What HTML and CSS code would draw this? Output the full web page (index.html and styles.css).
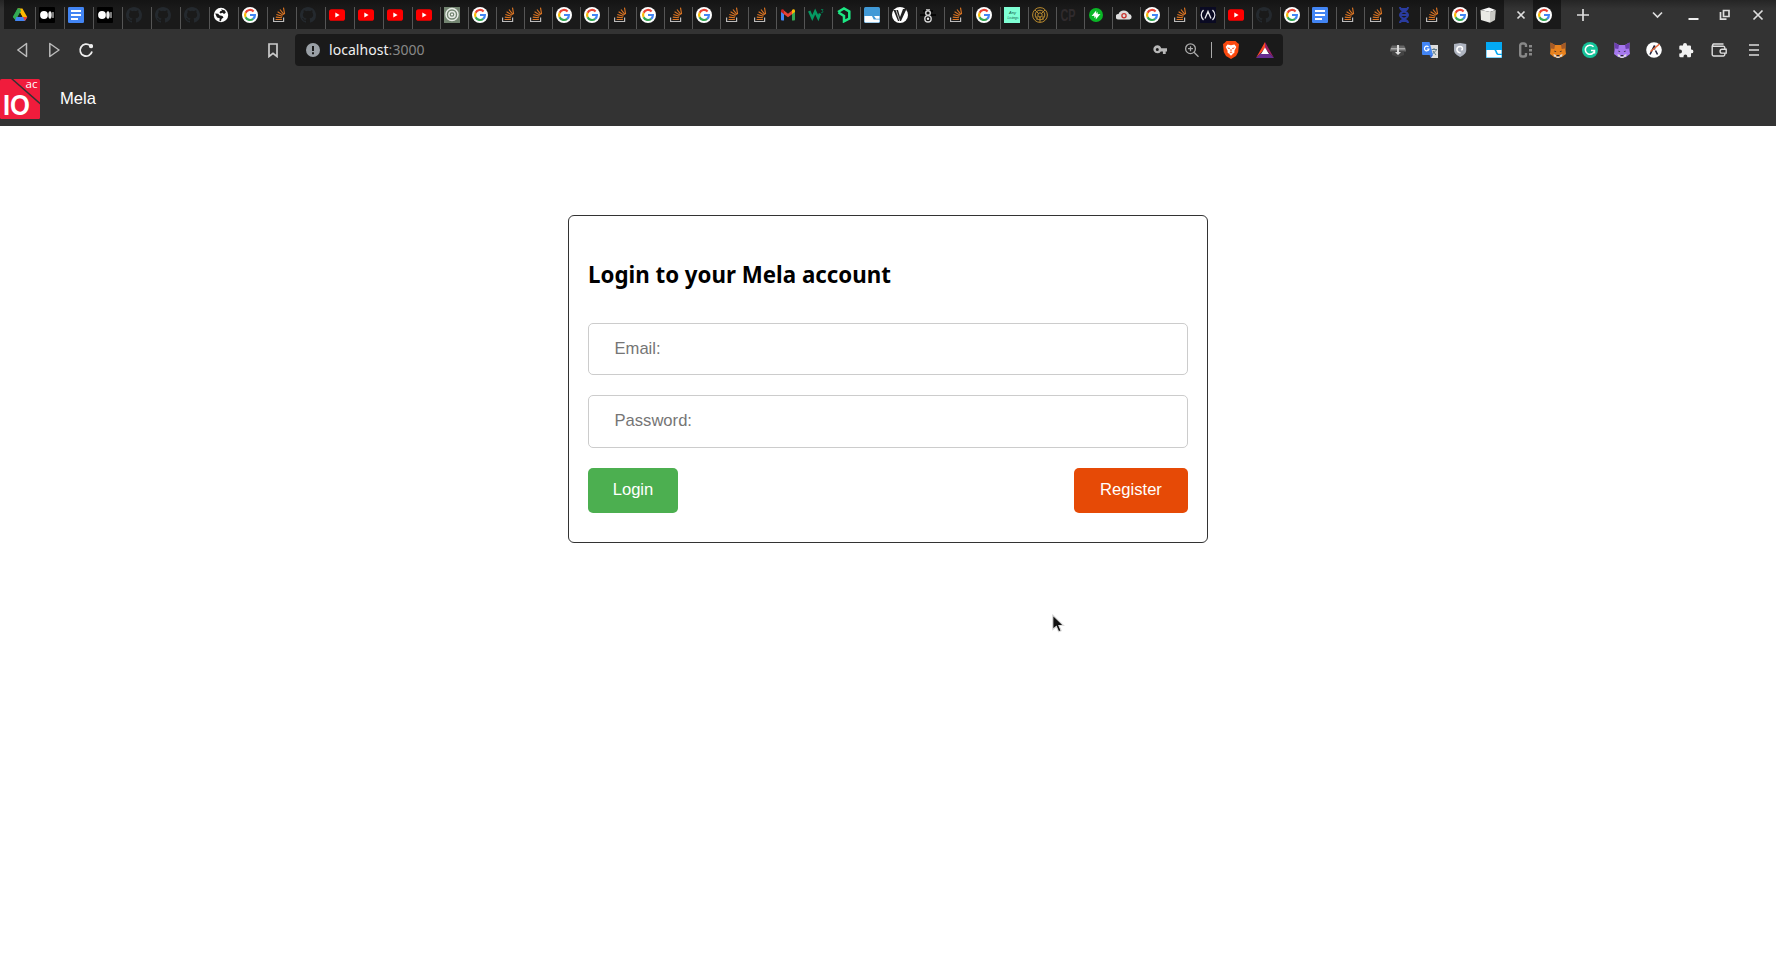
FILE: index.html
```html
<!DOCTYPE html>
<html lang="en">
<head>
<meta charset="utf-8">
<title>Mela</title>
<link rel="stylesheet" href="styles.css">
</head>
<body>
<svg class="sprite" xmlns="http://www.w3.org/2000/svg">
  <symbol id="drive" viewBox="0 0 16 16"><path fill="#0f9d58" d="M5.6 1.5h2.6L3.6 13.5.9 10z"/><path fill="#ffba00" d="M5.6 1.5h4.8L15.2 10h-4.8z"/><path fill="#34a853" d="M5.6 1.5H8L9 4 4 13.2.8 10z"/><path fill="#4285f4" d="M4.3 10h11l-2.4 4H3z"/><path fill="#ea4335" d="M11 10h4.3l-2.4 4z"/><path fill="#1a1a1a" d="M8 5.8l2.4 4.2H5.6z"/></symbol>
  <symbol id="medium" viewBox="0 0 16 16"><rect width="16" height="16" rx="1" fill="#000"/><circle cx="5" cy="8" r="3.9" fill="#fff"/><ellipse cx="11" cy="8" rx="1.7" ry="3.7" fill="#eee"/><rect x="13.4" y="5" width="1.2" height="6" rx=".6" fill="#ccc"/></symbol>
  <symbol id="docs" viewBox="0 0 16 16"><rect width="16" height="16" rx="1.3" fill="#4285f4"/><path fill="#fff" d="M3 3h10v2H3zM3 7h10v2H3zM3 11h7v2H3z"/></symbol>
  <symbol id="github" viewBox="0 0 16 16"><path fill="#24292e" d="M8 0C3.58 0 0 3.58 0 8c0 3.54 2.29 6.53 5.47 7.59.4.07.55-.17.55-.38v-1.49c-2.01.37-2.53-.49-2.69-.94-.09-.23-.48-.94-.82-1.13-.28-.15-.68-.52-.01-.53.63-.01 1.08.58 1.23.82.72 1.21 1.87.87 2.33.66.07-.52.28-.87.51-1.07-1.78-.2-3.64-.89-3.64-3.95 0-.87.31-1.59.82-2.15-.08-.2-.36-1.02.08-2.12 0 0 .67-.21 2.2.82a7.4 7.4 0 0 1 4 0c1.53-1.04 2.2-.82 2.2-.82.44 1.1.16 1.92.08 2.12.51.56.82 1.27.82 2.15 0 3.07-1.87 3.75-3.65 3.95.29.25.54.73.54 1.48v2.2c0 .21.15.46.55.38A8 8 0 0 0 16 8c0-4.42-3.58-8-8-8z"/></symbol>
  <symbol id="globe" viewBox="0 0 16 16"><circle cx="8" cy="8" r="7.2" fill="#fff"/><path fill="#1a1a1a" d="M2.200 6.500l3 .3 1.200 1.400L9.500 9l1 1.500-2 1.500-.5 2.200-1.500-.2.200-2.800-2.700-.7zM8 2.200l4 1.300.8 2.300-1.800 1.200-1.500-1.200-2 .8-1-1 .7-1.400 1.800-.4z"/></symbol>
  <symbol id="google" viewBox="0 0 16 16"><circle cx="8" cy="8" r="8" fill="#fff"/><g fill="none" stroke-width="2.200"><path stroke="#ea4335" d="M11.600 4.500A4.900 4.900 0 0 0 3.600 5.800"/><path stroke="#fbbc05" d="M3.650 5.700a4.900 4.900 0 0 0 0 4.600"/><path stroke="#34a853" d="M3.600 10.200a4.900 4.900 0 0 0 7.600 1.600"/><path stroke="#4285f4" d="M8 8h4.900a4.900 4.900 0 0 1-1.800 3.900"/></g></symbol>
  <symbol id="so" viewBox="0 0 16 16"><path fill="none" stroke="#bcbbbb" stroke-width="1.200" d="M2.600 10.500v4h10v-4"/><path fill="none" stroke="#f48024" stroke-width="1.100" d="M4.600 12.500h6.300M4.800 10.100l6.200.7M5.400 7.500l6 1.800M6.600 4.800l5.400 3.300M9 2.500l4 5.100M12.500.700l1.100 6.400" opacity=".9"/></symbol>
  <symbol id="youtube" viewBox="0 0 16 16"><rect y="2.300" width="16" height="11.500" rx="2.600" fill="#f00"/><path fill="#fff" d="M6.300 5.500v5L10.600 8z"/></symbol>
  <symbol id="rings" viewBox="0 0 16 16"><rect width="16" height="16" fill="#738571"/><g fill="none" stroke="#e8ece7" stroke-width="1.500"><circle cx="8" cy="7.500" r="6"/><circle cx="8" cy="7.500" r="3.100"/></g><circle cx="8" cy="7.500" r="1" fill="#fff"/></symbol>
  <symbol id="gmail" viewBox="0 0 16 16"><path fill="#4285f4" d="M1 4l3 2.200V13.500H2a1 1 0 0 1-1-1z"/><path fill="#34a853" d="M15 4l-3 2.200v7.300h2a1 1 0 0 0 1-1z"/><path fill="#ea4335" d="M3 2.800l5 3.900 5-3.900v3.800l-5 3.700-5-3.700z"/><path fill="#c5221f" d="M1 4c0-1.800 1.700-2.200 3-1v4L1 5z"/><path fill="#fbbc04" d="M15 4c0-1.800-1.700-2.200-3-1v4l3-2z"/></symbol>
  <symbol id="w3" viewBox="0 0 16 16"><path fill="none" stroke="#059862" stroke-width="2.500" d="M1.200 4l3.100 7L7.200 4.500l3.100 6.500L12 6.500"/><path fill="none" stroke="#06704b" d="M13 2.500h2L14 4c2 .2 1 2.300-1 1.500"/></symbol>
  <symbol id="hexleaf" viewBox="0 0 16 16"><path fill="none" stroke="#1ce783" stroke-width="2.500" d="M2 5l6-3.500 5.300 3v7L8 14.300V9L2.500 5.500"/></symbol>
  <symbol id="bluebox" viewBox="0 0 16 16"><rect width="16" height="16" rx="1.500" fill="#4099d6"/><path fill="#fff" d="M.500 9H8l1.700 3.500H15.500v2a1 1 0 0 1-1 1h-13a1 1 0 0 1-1-1zM10 9h5.500v2.700H12z"/></symbol>
  <symbol id="vee" viewBox="0 0 16 16"><circle cx="8" cy="8" r="8" fill="#fff"/><path fill="#222" d="M1.500 3H6l2 7 3-8h3.500L9 14H6z"/><path stroke="#fff" stroke-width=".7" d="M4 3l3.700 11"/></symbol>
  <symbol id="robot" viewBox="0 0 16 16"><path stroke="#050505" stroke-width="2" d="M0 8h16M3 4h10"/><g fill="#111" stroke="#d5d5d5" stroke-width="1.400"><circle cx="8" cy="6" r="2.300"/><circle cx="8" cy="11.800" r="3.200"/></g><circle cx="8" cy="11.800" r="1.200" fill="#eee"/><path stroke="#aaa" d="M6 2.500h4"/></symbol>
  <symbol id="radar" viewBox="0 0 16 16"><g fill="none" stroke="#b98a2e"><circle cx="8" cy="8" r="7.400"/><circle cx="8" cy="8" r="4.800"/><circle cx="8" cy="8" r="2.200"/><path d="M3 3l4 4M13 3L9 7M8 9v6M5 13V9M11 13V9"/></g></symbol>
  <symbol id="bolt" viewBox="0 0 16 16"><circle cx="8" cy="8" r="7" fill="#0ab626"/><path fill="#fff" d="M8.200 3.500v5.200l-1.700 2.500-.3-2.400-2.600.2zM7.800 12.500V7.300l1.700-2.500.3 2.400 2.600-.2z"/></symbol>
  <symbol id="cloud" viewBox="0 0 16 16"><path fill="#ddd" d="M2.500 12.500A2.500 2.500 0 0 1 2.500 7 5.500 5 0 0 1 13 7a2.800 2.800 0 0 1 .5 5.500z"/><circle cx="8" cy="8.800" r="2.100" fill="none" stroke="#c8302c" stroke-width="1.300"/></symbol>
  <symbol id="fcc" viewBox="0 0 16 16"><rect width="16" height="16" fill="#0a0a23"/><g fill="none" stroke="#e8e8ee" stroke-width="1.300"><path d="M3.500 3c-3 3-3 7 0 10M12.500 3c3 3 3 7 0 10M5 11.500L8 4.500l3 7"/></g></symbol>
  <symbol id="dna" viewBox="0 0 16 16"><path fill="none" stroke="#2a3c9f" stroke-width="2" d="M4 0c0 5 8 4 8 8s-8 4-8 8M12 0c0 5-8 4-8 8s8 4 8 8M5 2h6M5 14h6M4.500 8h7"/></symbol>
  <symbol id="cube" viewBox="0 0 16 16"><path fill="#fafafa" d="M1 3l8-2.500L15.500 3 10 5z"/><path fill="#e9e9e5" d="M.500 3L10 5v10.800L1 13z"/><path fill="#c9c9c4" d="M10 5l5.800-2-.8 10-5 2.800z"/></symbol>
  <symbol id="anvil" viewBox="0 0 16 16"><path fill="#666" d="M2 3.500h12l2 3.500v2.500H0V7z"/><path fill="#aaa" d="M1 6h14v1.500H1z"/><path fill="#444" d="M2 9.500h12V13l-5 2H7l-5-2z"/><path fill="#ddd" d="M7 3h2v7h2l-3 3-3-3h2z"/></symbol>
  <symbol id="translate" viewBox="0 0 16 16"><path fill="#ddd" d="M7 3h9v13H9z"/><path stroke="#607d8b" d="M9.500 7.500H15M12 6v1.500M10.500 12l4-4M11 9l3 4"/><path fill="#4285f4" d="M0 0h7.500L11 13H1a1 1 0 0 1-1-1z"/><path fill="#3367d6" d="M7.500 13H11l-2 3z"/><path fill="none" stroke="#fff" stroke-width="1.200" d="M6.500 5a2.300 2.300 0 1 0 .5 2H4.800"/></symbol>
  <symbol id="shield" viewBox="0 0 16 16"><path fill="#aeb4c0" d="M0 1l7-1 7 1v7c0 4-4 6.500-7 8-3-1.500-7-4-7-8z"/><path fill="none" stroke="#fff" stroke-width="1.800" d="M7.500 11.500C1.500 10 2.500 4 7 4c3 0 3.500 3 1.500 4.500"/></symbol>
  <symbol id="cyan" viewBox="0 0 16 16"><rect width="16" height="16" fill="#03a9f4"/><path fill="#fff" d="M.500 8H8c1.500 0 1.500 5 4 5h3.500v2.500H.500z"/><path fill="#fff" d="M10 8h5.500v3.800H13c-2 0-1.500-2.800-3-3.800z"/></symbol>
  <symbol id="cdots" viewBox="0 0 16 16"><path fill="none" stroke="#888" stroke-width="2.400" d="M8 5V3.500a2 2 0 0 0-2-2H4.200a2 2 0 0 0-2 2v9a2 2 0 0 0 2 2H6a2 2 0 0 0 2-2V11"/><path stroke="#888" stroke-width="3" stroke-dasharray="2.400 1.600" d="M12.500 3v10.500"/></symbol>
  <symbol id="fox" viewBox="0 0 16 16"><path fill="var(--fur)" d="M.500.500L5 3h6L15.500.500V8l.5 4-4 3-4 1-4-1-4-3 .5-4z"/><path fill="var(--dark)" d="M.500.500L5 3l-.7 4L1 6.500zM15.500.500L11 3l.7 4L15 6.500z"/><path fill="#292531" d="M4.500 8.500l2 1.300-1.800.3zM11.500 8.500l-2 1.300 1.800.3zM6.500 13h3l-.5 1.500H7z"/><path fill="#ddd" d="M3.500 12l2.500 1v2l-2-.5zM12.500 12L10 13v2l2-.5zM6 14.500h4l-.5 1.500h-3z"/></symbol>
  <symbol id="grammarly" viewBox="0 0 16 16"><circle cx="8" cy="8" r="8" fill="#15c39a"/><path fill="none" stroke="#fff" stroke-width="1.500" d="M11.500 4.800a4.600 4.600 0 1 0 1 3.700H9M12.500 8v3.500"/></symbol>
  <symbol id="aptos" viewBox="0 0 16 16"><circle cx="8" cy="8" r="7.800" fill="#fff"/><path fill="none" stroke="#22223a" stroke-width="1.600" d="M4 12.500l4.500-9v4M9.500 8.500l2 4"/><path stroke="#e96a3a" stroke-width="1.500" d="M4.500 9.500L13.500 2"/></symbol>
  <symbol id="puzzle" viewBox="0 0 16 16"><path fill="#f2f2f2" d="M5 3.500V3a2 2 0 0 1 4 0v.5h3a1.200 1.200 0 0 1 1 1V7.500h.5a1.900 1.900 0 0 1 0 3.800H13v3a1 1 0 0 1-1 1H9.300v-.8a1.900 1.900 0 0 0-3.800 0v.8H2.500a1.200 1.200 0 0 1-1.200-1V11.500H2a2 2 0 0 0 0-4h-.7v-3a1 1 0 0 1 1-1z"/></symbol>
  <symbol id="wallet" viewBox="0 0 16 16"><g fill="none" stroke="#dedede" stroke-width="1.400"><path d="M1.200 3.500v9A1.500 1.500 0 0 0 2.700 14h9.600a1.500 1.500 0 0 0 1.500-1.500V5.800a1.500 1.500 0 0 0-1.500-1.500H2.500a1.200 1.200 0 0 1 0-2.300h10"/><path fill="#333" d="M15.200 7.300H11a1.900 1.900 0 0 0 0 3.800h4.200z"/></g></symbol>
</svg>

<header class="browser">
  <div class="tabstrip">
    <div class="tabs">
      <div class="tab first"><svg><use href="#drive"/></svg></div>
      <div class="tab wide"><svg><use href="#medium"/></svg></div>
      <div class="tab wide"><svg><use href="#docs"/></svg></div>
      <div class="tab wide"><svg><use href="#medium"/></svg></div>
      <div class="tab wide"><svg><use href="#github"/></svg></div>
      <div class="tab wide"><svg><use href="#github"/></svg></div>
      <div class="tab wide"><svg><use href="#github"/></svg></div>
      <div class="tab wide"><svg><use href="#globe"/></svg></div>
      <div class="tab wide"><svg><use href="#google"/></svg></div>
      <div class="tab wide"><svg><use href="#so"/></svg></div>
      <div class="tab wide"><svg><use href="#github"/></svg></div>
      <div class="tab wide"><svg><use href="#youtube"/></svg></div>
      <div class="tab wide"><svg><use href="#youtube"/></svg></div>
      <div class="tab wide"><svg><use href="#youtube"/></svg></div>
      <div class="tab"><svg><use href="#youtube"/></svg></div>
      <div class="tab"><svg><use href="#rings"/></svg></div>
      <div class="tab"><svg><use href="#google"/></svg></div>
      <div class="tab"><svg><use href="#so"/></svg></div>
      <div class="tab"><svg><use href="#so"/></svg></div>
      <div class="tab"><svg><use href="#google"/></svg></div>
      <div class="tab"><svg><use href="#google"/></svg></div>
      <div class="tab"><svg><use href="#so"/></svg></div>
      <div class="tab"><svg><use href="#google"/></svg></div>
      <div class="tab"><svg><use href="#so"/></svg></div>
      <div class="tab"><svg><use href="#google"/></svg></div>
      <div class="tab"><svg><use href="#so"/></svg></div>
      <div class="tab"><svg><use href="#so"/></svg></div>
      <div class="tab"><svg><use href="#gmail"/></svg></div>
      <div class="tab"><svg><use href="#w3"/></svg></div>
      <div class="tab"><svg><use href="#hexleaf"/></svg></div>
      <div class="tab"><svg><use href="#bluebox"/></svg></div>
      <div class="tab"><svg><use href="#vee"/></svg></div>
      <div class="tab"><svg><use href="#robot"/></svg></div>
      <div class="tab"><svg><use href="#so"/></svg></div>
      <div class="tab"><svg><use href="#google"/></svg></div>
      <div class="tab"><svg viewBox="0 0 16 16"><rect width="16" height="16" fill="#7fffd4"/><text class="mint-text" x="5" y="7">Any</text><text class="mint-text" x="3.500" y="11.600" textLength="11" lengthAdjust="spacingAndGlyphs">Listings</text></svg></div>
      <div class="tab"><svg><use href="#radar"/></svg></div>
      <div class="tab"><svg viewBox="0 0 16 16"><text class="cp-text" x=".5" y="14" textLength="15" lengthAdjust="spacingAndGlyphs">CP</text></svg></div>
      <div class="tab"><svg><use href="#bolt"/></svg></div>
      <div class="tab"><svg><use href="#cloud"/></svg></div>
      <div class="tab"><svg><use href="#google"/></svg></div>
      <div class="tab"><svg><use href="#so"/></svg></div>
      <div class="tab"><svg><use href="#fcc"/></svg></div>
      <div class="tab"><svg><use href="#youtube"/></svg></div>
      <div class="tab"><svg><use href="#github"/></svg></div>
      <div class="tab"><svg><use href="#google"/></svg></div>
      <div class="tab"><svg><use href="#docs"/></svg></div>
      <div class="tab"><svg><use href="#so"/></svg></div>
      <div class="tab"><svg><use href="#so"/></svg></div>
      <div class="tab"><svg><use href="#dna"/></svg></div>
      <div class="tab"><svg><use href="#so"/></svg></div>
      <div class="tab"><svg><use href="#google"/></svg></div>
      <div class="tab"><svg><use href="#cube"/></svg></div>
      <div class="tab active"><svg viewBox="0 0 16 16"><path class="line" d="M4.500 4.500l7 7M11.500 4.500l-7 7"/></svg></div>
      <div class="tab last"><svg><use href="#google"/></svg></div>
    </div>
    <svg class="new-tab" viewBox="0 0 14 14"><path class="line" d="M7 1v12M1 7h12"/></svg>
    <svg class="window-buttons" viewBox="0 0 112 14"><path class="line" d="M1 4.500l4.500 4.500L10 4.500"/><path class="thick" d="M36.500 11h10"/><path class="line" d="M68.500 4v7.200h6M71.500 2.500H77v6h-5.500z"/><path class="line" d="M101.500 2.500l9 9M110.500 2.500l-9 9"/></svg>
  </div>
  <div class="toolbar">
    <svg class="nav-buttons" viewBox="0 0 76 16"><g class="dim"><path d="M9.500 1.500v13L.8 8z"/><path d="M32.800 1.500v13L42 8z"/></g><path class="reload" d="M75 9.500a6 6 0 1 1-1.800-5.800"/><circle cx="74" cy="4.200" r="2.100" fill="#eee"/></svg>
    <svg class="bookmark" viewBox="0 0 10 15"><path d="M1 1h8v12.500L5 10.300l-4 3.200z"/></svg>
    <div class="address">
      <svg class="info" viewBox="0 0 14 14"><circle cx="7" cy="7" r="7" fill="#9aa0a6"/><path fill="#1a1a1a" d="M6 3h2v5H6zM6 9.200h2v2H6z"/></svg>
      <div class="url">localhost<span>:3000</span></div>
      <svg class="address-icons" viewBox="0 0 124 18"><path fill="#b8b8b8" fill-rule="evenodd" d="M4.300 4.300a4 4 0 0 1 3.900 2.900H14v3.200h-1.300V13H9.900v-2.600H7.800a4 4 0 1 1-3.500-6.100zm0 2.600a1.500 1.500 0 1 0 0 3 1.500 1.500 0 0 0 0-3z"/><g fill="none" stroke="#aaa" stroke-width="1.300"><circle cx="37.500" cy="7.700" r="4.900"/><path d="M41 11.300l4.500 4.500M35 7.700h5M37.500 5.200v5"/></g><path fill="#aaa" d="M58 1h1v16h-1z"/><path fill="#fb4a10" d="M73.500 0h9l2 2 1.500 1-.8 8-2.200 4-5 3-5-3-2.200-4L70 3l1.500-1z"/><path fill="#fff" d="M74.500 3.500l3.500.7 3.500-.7L83.300 6l-2 4 .3 1.200-3.600 3.600-3.600-3.600.3-1.200-2-4z"/><path fill="#fb4a10" d="M74 6.500l3 .5-.8 1.300zM82 6.500l-3 .5.800 1.300zM77.600 8h.8l.2 2.600h-1.200zM76 12.300l2-1.300 2 1.300-2-.3z"/><path fill="#ff4724" d="M112 1v6l-4.500 5.500L103 17z"/><path fill="#9e1f63" d="M112 1l9 16-4.500-4.500L112 7z"/><path fill="#662d91" d="M103 17l4.500-4.500h9L121 17z"/><path fill="#fff" d="M112 6.500l4 6.500h-8z"/></svg>
    </div>
    <div class="extensions">
      <svg><use href="#anvil"/></svg>
      <svg><use href="#translate"/></svg>
      <svg class="shield"><use href="#shield"/></svg>
      <svg><use href="#cyan"/></svg>
      <svg><use href="#cdots"/></svg>
      <svg class="fox-orange"><use href="#fox"/></svg>
      <svg><use href="#grammarly"/></svg>
      <svg class="fox-violet"><use href="#fox"/></svg>
      <svg><use href="#aptos"/></svg>
      <svg><use href="#puzzle"/></svg>
      <svg class="wallet"><use href="#wallet"/></svg>
      <svg class="menu" viewBox="0 0 10 16"><path d="M0 3h10M0 8h10M0 13h10" stroke="#ddd" stroke-width="1.500"/></svg>
    </div>
  </div>
</header>

<nav class="site-nav">
  <svg class="logo" viewBox="0 0 40 40"><rect width="40" height="40" rx="1.500" fill="#f01c3c"/><path d="M11.500-.5L40.500 25" stroke="#333" stroke-width="1.500"/><text class="logo-text" x="25.500" y="8.500" textLength="12" lengthAdjust="spacingAndGlyphs">ac</text><text class="logo-text io" x="3" y="35.500" textLength="27" lengthAdjust="spacingAndGlyphs">IO</text></svg>
  <a class="brand">Mela</a>
</nav>

<main class="page">
  <form class="card">
    <h2>Login to your Mela account</h2>
    <input class="email" type="text" placeholder="Email:">
    <input class="password" type="password" placeholder="Password:">
    <div class="actions">
      <button class="login" type="button">Login</button>
      <button class="register" type="button">Register</button>
    </div>
  </form>
</main>
<svg class="cursor" viewBox="0 0 14 20"><path d="M.8 1v14.500l3.500-3 2.300 5.300 2.600-1.100-2.300-5.200h4.700z" fill="#111" stroke="#ddd" stroke-width="1.100"/></svg>
</body>
</html>
```
FILE: styles.css
```css
* { box-sizing: border-box; }
body {
  margin: 0;
  height: 964px;
  overflow: hidden;
  background: #fff;
  font-family: "Liberation Sans", Arial, sans-serif;
  font-size: 16.6px;
}
svg { display: block; flex: none; }
.sprite { position: absolute; width: 0; height: 0; }

.browser { background: #333; }
.tabstrip {
  display: flex;
  height: 29px;
  padding-left: 4px;
  background: linear-gradient(#252525, #333 9px);
}
.tabs { display: flex; }
.tab {
  width: 28px;
  height: 29px;
  padding: 7px 0 0 4px;
  background: linear-gradient(#555, #555) 0 7px / 1px 22px no-repeat, linear-gradient(#141414, #1a1a1a 9px);
}
.tab.wide { width: 29px; }
.tab.first { width: 31px; padding-left: 8px; }
.tab.first, .tab.last { background: linear-gradient(#141414, #1a1a1a 9px); }
.tab.last { padding-left: 3px; }
.tab.active { width: 29px; padding-left: 9px; background: none; }
.tab svg { width: 16px; height: 16px; }
.mint-text { font: italic 4px "Liberation Sans", sans-serif; fill: #154; }
.cp-text { font: 700 17px "Liberation Sans", sans-serif; fill: #302b2d; }
.line { fill: none; stroke: #ddd; stroke-width: 1.7; }
.thick { fill: none; stroke: #eee; stroke-width: 2; }
.new-tab { width: 14px; height: 14px; margin: 8px 0 0 15px; }
.window-buttons { width: 112px; height: 14px; margin: 8px 0 0 61.5px; }

.toolbar { display: flex; align-items: center; height: 42px; padding-left: 17px; }
.nav-buttons { width: 76px; height: 16px; }
.nav-buttons path { fill: none; stroke: #bbb; stroke-width: 1.5; stroke-linejoin: round; }
.nav-buttons .reload { stroke: #eee; stroke-width: 1.8; }
.bookmark { width: 10px; height: 15px; margin-left: 175px; }
.bookmark path { fill: none; stroke: #ccc; stroke-width: 1.7; }
.address {
  display: flex;
  align-items: center;
  width: 988px;
  height: 32px;
  margin-left: 17px;
  padding-left: 11px;
  border-radius: 4px;
  background: #1a1a1a;
}
.info { width: 14px; height: 14px; }
.url {
  flex: 1;
  margin-left: 9px;
  color: #f0f0f0;
  font: 14px/20px "Noto Sans", sans-serif;
  letter-spacing: .05px;
}
.url span { color: #888; }
.address-icons { width: 124px; height: 18px; margin-right: 6px; }
.extensions { display: flex; gap: 16px; margin-left: 107px; }
.extensions svg { width: 16px; height: 16px; }
.extensions .shield { width: 14px; margin-right: 2px; }
.extensions .wallet { width: 18px; }
.extensions .menu { width: 10px; margin-left: 5px; }
.fox-orange { --fur: #e8821e; --dark: #a45a28; }
.fox-violet { --fur: #a678ef; --dark: #6c3fb0; }

.site-nav { display: flex; height: 55px; padding-top: 8px; background: #333; }
.logo { width: 40px; height: 40px; }
.logo-text { font: 10px "Open Sans", sans-serif; fill: #fff; }
.logo-text.io { font: 700 29px "Liberation Sans", sans-serif; }
.brand { margin-left: 20px; color: #fff; line-height: 39px; }

.page { display: flex; justify-content: center; padding-top: 89px; }
.card {
  width: 640px;
  height: 328px;
  padding: 41px 19px 0;
  border: 1px solid #333;
  border-radius: 6px;
}
.card h2 {
  height: 66px;
  margin: 0;
  font: 700 22.3px/36px "Noto Sans", sans-serif;
  color: #000;
  white-space: nowrap;
}
.card input {
  display: block;
  width: 600px;
  height: 52px;
  margin: 0 0 20px;
  padding: 0 25.5px 1px;
  border: 1px solid #ccc;
  border-radius: 5px;
  background: #fff;
  font: inherit;
}
.card input::placeholder { color: #757575; }
.card .password { height: 53px; }
.actions { display: flex; justify-content: space-between; }
.actions button {
  height: 45px;
  padding: 0 0 2px;
  border: 0;
  border-radius: 5px;
  color: #fff;
  font: inherit;
}
.login { width: 90px; background: #4caf50; }
.register { width: 114px; background: #e64a06; }
.cursor { position: absolute; left: 1052px; top: 614px; width: 14px; height: 20px; }
```
